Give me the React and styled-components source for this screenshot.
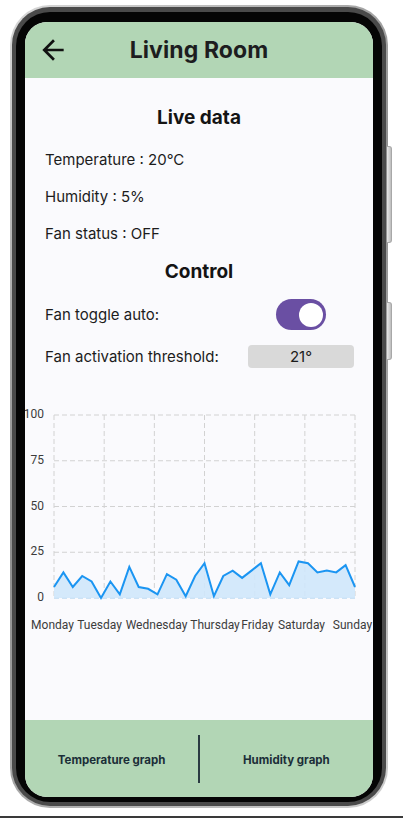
import React from "react";
import styled, { createGlobalStyle } from "styled-components";

const GlobalStyle = createGlobalStyle`
  html, body {
    margin: 0;
    padding: 0;
    background: #ffffff;
  }
  body {
    font-family: Inter, "Noto Sans", sans-serif;
  }
`;

const Page = styled.div`
  width: 403px;
  height: 820px;
  padding: 5px 0 0 10px;
  box-sizing: border-box;
  background: #ffffff;
`;

const Phone = styled.div`
  position: relative;
  width: 378px;
  height: 803px;
  box-sizing: border-box;
  padding: 2px;
  border-radius: 40px;
  background: linear-gradient(135deg, #d8d8d8, #8e8e8e 45%, #cfcfcf);
`;

const SideButton = styled.div`
  position: absolute;
  right: -4px;
  top: ${(p) => p.top}px;
  width: 5px;
  height: ${(p) => p.h}px;
  border-radius: 0 3px 3px 0;
  background: linear-gradient(90deg, #e6e6e6, #bdbdbd);
  border: 1px solid #a8a8a8;
  border-left: none;
  box-sizing: border-box;
`;

const Bezel = styled.div`
  height: 100%;
  box-sizing: border-box;
  padding: 5px 4px 4px 4px;
  border-radius: 38px;
  background: #4a4a4a;
`;

const Inner = styled.div`
  height: 100%;
  box-sizing: border-box;
  padding: 10px 9px 5px 9px;
  border-radius: 34px;
  background: #050505;
`;

const Screen = styled.div`
  height: 100%;
  display: flex;
  flex-direction: column;
  border-radius: 22px;
  overflow: hidden;
  background: #fafafd;
`;

const Header = styled.div`
  height: 56px;
  flex-shrink: 0;
  background: #b2d6b5;
  display: flex;
  align-items: center;
  position: relative;
  padding-left: 11px;
`;

const BackButton = styled.button`
  border: none;
  background: none;
  padding: 0;
  width: 34px;
  height: 34px;
  display: flex;
  align-items: center;
  justify-content: center;
  cursor: pointer;
`;

const Title = styled.h1`
  flex: 1;
  margin: 0 45px 0 0;
  text-align: center;
  font-size: 23px;
  font-weight: 700;
  color: #1d1d1f;
  letter-spacing: 0.1px;
`;

const Content = styled.div`
  flex: 1;
  display: flex;
  flex-direction: column;
  padding: 28px 0 0 0;
`;

const SectionTitle = styled.h2`
  margin: 0;
  text-align: center;
  font-size: 19px;
  line-height: 24px;
  font-weight: 700;
  color: #141414;
  margin-bottom: ${(p) => p.mb}px;
`;

const InfoRow = styled.div`
  height: 37px;
  display: flex;
  align-items: center;
  padding-left: 20px;
  font-size: 15px;
  color: #1c1c1c;
`;

const ControlRow = styled.div`
  height: ${(p) => p.h}px;
  display: flex;
  align-items: center;
  justify-content: space-between;
  padding: 0 19px 0 20px;
  margin-bottom: ${(p) => p.mb || 0}px;
  font-size: 15px;
  color: #1c1c1c;
`;

const Toggle = styled.div`
  width: 50px;
  height: 31px;
  box-sizing: border-box;
  border-radius: 16px;
  background: #6a4fa3;
  display: flex;
  align-items: center;
  justify-content: flex-end;
  padding-right: 3px;
  margin-right: 28px;
`;

const Knob = styled.div`
  width: 24px;
  height: 24px;
  border-radius: 50%;
  background: #ffffff;
`;

const ValueBox = styled.div`
  width: 106px;
  height: 23px;
  border-radius: 4px;
  background: #d9d9d9;
  display: flex;
  align-items: center;
  justify-content: center;
  font-size: 15px;
  color: #1c1c1c;
`;

const ChartWrap = styled.div`
  margin-top: 32px;
  height: 240px;
`;

const BottomBar = styled.div`
  height: 77px;
  flex-shrink: 0;
  background: #b2d6b5;
  display: grid;
  grid-template-columns: 1fr auto 1fr;
  align-items: center;
`;

const TabButton = styled.button`
  border: none;
  background: none;
  font-family: Inter, "Noto Sans", sans-serif;
  font-size: 11.5px;
  font-weight: 700;
  color: #1b2e38;
  padding: 0;
  margin-top: ${(p) => p.offset}px;
  cursor: pointer;
`;

const Divider = styled.div`
  width: 1.5px;
  height: 48px;
  background: #2a3b42;
  margin-top: 1px;
`;

const BaseLine = styled.div`
  height: 2px;
  background: #3a3a3a;
  margin: 8px 0 0 -10px;
  width: 403px;
`;

const values = [
  6, 14, 6, 12, 9, 0, 9, 2, 17, 6, 5, 2, 13, 10, 1, 12, 19, 1, 12, 15, 11, 15,
  19, 2, 14, 7, 20, 19, 14, 15, 14, 18, 6,
];

const days = [
  ["Monday", 27.5],
  ["Tuesday", 74.5],
  ["Wednesday", 131.5],
  ["Thursday", 190],
  ["Friday", 232.5],
  ["Saturday", 276.5],
  ["Sunday", 327.5],
];

function Chart() {
  const x0 = 29;
  const x1 = 330;
  const yTop = 15;
  const yBot = 198;
  const sx = (x1 - x0) / (values.length - 1);
  const sy = (yBot - yTop) / 100;
  const pts = values.map((v, i) => [x0 + i * sx, yBot - v * sy]);
  const line = pts.map((p, i) => `${i ? "L" : "M"}${p[0].toFixed(1)} ${p[1].toFixed(1)}`).join(" ");
  const area = `${line} L${x1} ${yBot} L${x0} ${yBot} Z`;
  const ticks = [100, 75, 50, 25, 0];
  const vlines = [0, 1, 2, 3, 4, 5, 6].map((i) => x0 + (i * (x1 - x0)) / 6);

  return (
    <svg width="348" height="240" viewBox="0 0 348 240">
      {ticks.map((t) => {
        const y = yBot - t * sy;
        return (
          <g key={t}>
            <line x1={x0} x2={x1} y1={y} y2={y} stroke={t === 0 ? "#9fc9ec" : "#d2d2d2"} strokeWidth="1" strokeDasharray="5 3" />
            <text x="19" y={y} textAnchor="end" dominantBaseline="middle" fontFamily="Roboto, sans-serif" fontSize="12" fill="#3c3c3c">
              {t}
            </text>
          </g>
        );
      })}
      {vlines.map((x, i) => (
        <line key={i} x1={x} x2={x} y1={yTop} y2={yBot} stroke="#d2d2d2" strokeWidth="1" strokeDasharray="5 3" />
      ))}
      <path d={area} fill="#cfe7fb" fillOpacity="0.9" />
      <path d={line} fill="none" stroke="#1b95f2" strokeWidth="2" strokeLinejoin="miter" />
      {days.map(([d, x]) => (
        <text key={d} x={x} y="226" textAnchor="middle" dominantBaseline="middle" fontFamily="Roboto, sans-serif" fontSize="12" fill="#3c3c3c">
          {d}
        </text>
      ))}
    </svg>
  );
}

function ArrowBack() {
  return (
    <svg width="32" height="32" viewBox="0 0 24 24">
      <path d="M20 11H7.83l5.59-5.59L12 4l-8 8 8 8 1.41-1.41L7.83 13H20v-2z" fill="#111" />
    </svg>
  );
}

export default function App() {
  return (
    <>
      <GlobalStyle />
      <Page>
        <Phone>
          <SideButton top={141} h={97} />
          <SideButton top={297} h={58} />
          <Bezel>
            <Inner>
              <Screen>
                <Header>
                  <BackButton aria-label="Back">
                    <ArrowBack />
                  </BackButton>
                  <Title>Living Room</Title>
                </Header>
                <Content>
                  <SectionTitle mb={11}>Live data</SectionTitle>
                  <InfoRow>Temperature : 20°C</InfoRow>
                  <InfoRow>Humidity : 5%</InfoRow>
                  <InfoRow>Fan status : OFF</InfoRow>
                  <SectionTitle mb={15} style={{ marginTop: 8 }}>Control</SectionTitle>
                  <ControlRow h={31} mb={15}>
                    <span>Fan toggle auto:</span>
                    <Toggle>
                      <Knob />
                    </Toggle>
                  </ControlRow>
                  <ControlRow h={23}>
                    <span>Fan activation threshold:</span>
                    <ValueBox>21°</ValueBox>
                  </ControlRow>
                  <ChartWrap>
                    <Chart />
                  </ChartWrap>
                </Content>
                <BottomBar>
                  <TabButton offset={2}>Temperature graph</TabButton>
                  <Divider />
                  <TabButton offset={2}>Humidity graph</TabButton>
                </BottomBar>
              </Screen>
            </Inner>
          </Bezel>
        </Phone>
        <BaseLine />
      </Page>
    </>
  );
}
